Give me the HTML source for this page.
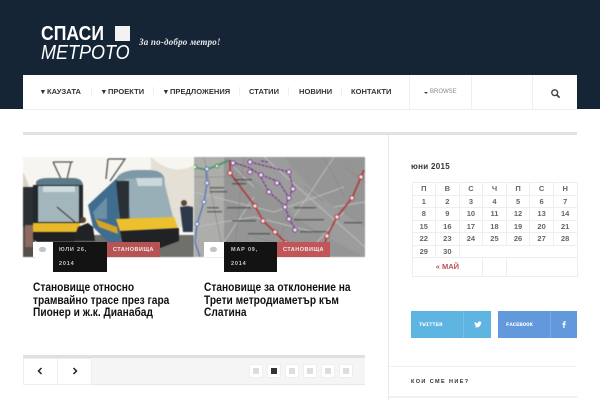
<!DOCTYPE html>
<html><head><meta charset="utf-8">
<style>
*{box-sizing:border-box;margin:0;padding:0}
html,body{width:600px;height:400px;overflow:hidden;background:#fff;font-family:"Liberation Sans","Noto Sans CJK JP",sans-serif;position:relative}
.a{position:absolute}
.t{position:absolute;white-space:nowrap}
.nav{font-size:7.5px;font-weight:bold;color:#333;letter-spacing:.05px;top:87px;line-height:10px}
.sep{position:absolute;top:87px;width:1px;height:8px;background:#eee}
.title{position:absolute;font-size:11.5px;font-weight:bold;color:#111;line-height:12.6px;white-space:nowrap;transform:scaleX(.885);transform-origin:left top}
.meta{position:absolute;font-size:5.5px;font-weight:bold;color:#c9c9c9;letter-spacing:.8px;white-space:nowrap}
.red{position:absolute;background:#b85355;color:#eee;font-size:5.5px;font-weight:bold;letter-spacing:.5px;text-align:center;line-height:16px;height:15px;top:242px}
.dot{position:absolute;top:364px;width:14px;height:14px;background:#fff;border:1px solid #eee}
.dot i{position:absolute;left:3px;top:3px;width:6px;height:6px;background:#ddd;display:block}
table{position:absolute;left:411.5px;top:182px;width:166px;height:94px;border-collapse:collapse;table-layout:fixed;font-size:7.5px;font-weight:bold;color:#666;text-align:center}
td{border:1px solid #eee;padding:0;line-height:10px}
svg.img{filter:blur(.5px)}
</style></head>
<body>
<div class="a" style="left:0;top:0;width:600px;height:109px;background:#152536"></div>
<div class="t" style="left:41px;top:23px;font-size:20px;font-weight:bold;color:#fff;line-height:22px;transform:scaleX(.88);transform-origin:left">СПАСИ</div>
<div class="a" style="left:115px;top:26px;width:15px;height:15px;background:#f2f2f2"></div>
<div class="t" style="left:41px;top:42px;font-size:20px;font-style:italic;color:#fff;line-height:22px;transform:scaleX(.9);transform-origin:left">МЕТРОТО</div>
<div class="t" style="left:139px;top:36px;font-family:'Liberation Serif',serif;font-size:9px;font-style:italic;font-weight:bold;color:#e8e8e8;letter-spacing:.2px;line-height:12px">За по-добро метро!</div>

<div class="a" style="left:23px;top:75px;width:554px;height:35px;background:#fff;border-bottom:1px solid #eee"></div>
<div class="t nav" style="left:41px">▾ КАУЗАТА</div><div class="sep" style="left:91px"></div>
<div class="t nav" style="left:102px">▾ ПРОЕКТИ</div><div class="sep" style="left:153px"></div>
<div class="t nav" style="left:164px">▾ ПРЕДЛОЖЕНИЯ</div><div class="sep" style="left:239px"></div>
<div class="t nav" style="left:249px">СТАТИИ</div><div class="sep" style="left:288px"></div>
<div class="t nav" style="left:299px">НОВИНИ</div><div class="sep" style="left:341px"></div>
<div class="t nav" style="left:351px">КОНТАКТИ</div>
<div class="a" style="left:409px;top:75px;width:1px;height:34px;background:#eee"></div>
<div class="a" style="left:471px;top:75px;width:1px;height:34px;background:#eee"></div>
<div class="a" style="left:532px;top:75px;width:1px;height:34px;background:#eee"></div>
<div class="a" style="left:424px;top:92px;width:0;height:0;border:2px solid transparent;border-top:2.5px solid #444"></div>
<div class="t" style="left:430px;top:88px;font-size:6px;color:#888;line-height:9px">BROWSE</div>
<svg class="a" style="left:550px;top:88px" width="11" height="11" viewBox="0 0 11 11"><circle cx="4.7" cy="4.7" r="2.9" fill="none" stroke="#444" stroke-width="1.4"/><path d="M7 7L9.6 9.6" stroke="#444" stroke-width="1.7"/></svg>

<div class="a" style="left:23px;top:132px;width:554px;height:3px;background:#e2e2e2"></div>
<div class="a" style="left:388px;top:135px;width:1px;height:265px;background:#e8e8e8"></div>

<svg class="a img" style="left:23px;top:157px" width="171" height="100" viewBox="0 0 171 100">
<rect width="171" height="100" fill="#f7f5f0"/>
<path d="M128 0Q150 20 171 8V70H128Z" fill="#e5e0d5"/>
<path d="M0 15Q8 30 14 60H0Z" fill="#d8d2c4"/>
<path d="M55 78H171V100H40Z" fill="#6f6f6c"/>
<rect y="60" width="12" height="40" fill="#55504b"/>
<path d="M30 5L38 22M48 5L44 22M30 5H50" stroke="#555" stroke-width="1.3" fill="none"/>
<path d="M85 2L83 22M85 2H102L87 24" stroke="#555" stroke-width="1.3" fill="none"/>
<path d="M0 30H12V70H0Z" fill="#2c2f33"/>
<path d="M13 25Q15 21 25 21H50Q59 21 60 28V66H13Z" fill="#5d7a88"/>
<rect x="10" y="28" width="50" height="38" fill="#23282d"/>
<rect x="15" y="29" width="41" height="36" fill="#a3b6bc"/>
<rect x="20" y="29" width="32" height="6" fill="#cfdde0"/>
<path d="M10 66H57V75H10Z" fill="#e9b92a"/>
<path d="M10 75H57V82L50 85H14L10 82Z" fill="#1f2022"/>
<path d="M34 50L52 65" stroke="#333" stroke-width="1"/>
<path d="M55 70L65 66L70 70L72 84H50Z" fill="#202226"/><circle cx="60" cy="63" r="3" fill="#5a4030"/>
<rect x="2" y="68" width="8" height="22" fill="#8e6a60"/>
<path d="M65 48L94 21L98 85L88 88L70 70Z" fill="#3f6d90"/>
<path d="M70 55L84 40V62L72 62Z" fill="#6b8fa5"/>
<path d="M72 62L94 70L95 77L76 70Z" fill="#d9a326"/>
<path d="M94 20Q100 13 115 13H125Q138 13 141 20L146 60L97 65Z" fill="#7d99a5"/>
<path d="M102 22L140 20L150 60L108 63Z" fill="#98afb7"/>
<path d="M93 24H106L106 62L97 64Z" fill="#2b3036"/>
<path d="M113 21H139V29H115Z" fill="#ccd9dc"/>
<path d="M93 62L151 60L155 71L97 74Z" fill="#edc02d"/>
<path d="M97 74L156 71V84L137 91L100 89Z" fill="#212225"/>
<path d="M157 50L165 49L170 50V75H160Z" fill="#2e3a4c"/><circle cx="161" cy="46" r="3" fill="#5a4638"/>
</svg>

<svg class="a img" style="left:194px;top:157px" width="171" height="100" viewBox="0 0 171 100">
<rect width="171" height="100" fill="#959595"/>
<path d="M0 0H30V100H0Z" fill="#adadaa"/>
<path d="M30 0Q70 30 90 50T171 100V70Q120 40 90 0Z" fill="#9c9c9c"/>
<g stroke="#bdbdbd" fill="none" stroke-width="1">
<path d="M70 0L171 90M0 35L80 55L150 30M20 100L60 40M100 60L140 0M110 100L150 55M0 70L60 60L120 75M140 50L171 45M40 10L60 30"/>
</g>
<g stroke="#858585" fill="none" stroke-width=".6"><path d="M10 0L30 100M50 0L40 100M90 70L80 100M130 0L150 40M0 20H40M150 10L171 25M110 30L130 45M60 80L100 90"/></g>
<path d="M0 10L12 13L24 8L36 3" stroke="#3b9a5d" stroke-width="1.5" fill="none"/>
<path d="M12 13L13 26L10 45L3 67L1 85L6 100" stroke="#5a78b8" stroke-width="1.3" fill="none"/>
<path d="M36 3L36 16L61 49L69 64L81 75L92 86M170 13L167 20L158 41L143 60L133 79L131 86" stroke="#b23a3e" stroke-width="1.6" fill="none"/>
<g stroke="#7a3f8c" stroke-width="1.3" fill="none" stroke-dasharray="3 1">
<path d="M38 5L56 11L65 17L85 25L95 41L91 49L95 62L102 73M56 5L95 15L99 31L95 41M67 4L75 5M65 17L75 35L91 49"/>
</g>
<g fill="#f2e9ee" stroke="#b23a3e" stroke-width="1"><circle cx="36" cy="16" r="2.2"/><circle cx="61" cy="49" r="2.2"/><circle cx="69" cy="64" r="2.2"/><circle cx="81" cy="75" r="2.2"/><circle cx="92" cy="86" r="2.2"/><circle cx="167" cy="20" r="2.2"/><circle cx="158" cy="41" r="2.2"/><circle cx="143" cy="60" r="2.2"/><circle cx="133" cy="79" r="2.2"/></g>
<g fill="#f0e6f2" stroke="#7a3f8c" stroke-width="1"><circle cx="56" cy="5" r="2.2"/><circle cx="56" cy="15" r="2.2"/><circle cx="67" cy="18" r="2.2"/><circle cx="95" cy="15" r="2.2"/><circle cx="83" cy="26" r="2.2"/><circle cx="99" cy="32" r="2.2"/><circle cx="75" cy="35" r="2.2"/><circle cx="95" cy="41" r="2.2"/><circle cx="91" cy="50" r="2.2"/><circle cx="95" cy="62" r="2.2"/><circle cx="101" cy="73" r="2.2"/><circle cx="39" cy="6" r="2.2"/></g>
<g fill="#e8f4ea" stroke="#3b9a5d"><circle cx="1" cy="10" r="1.8"/><circle cx="23" cy="9" r="1.8"/></g>
<g fill="#e8ecf6" stroke="#5a78b8"><circle cx="13" cy="12" r="2"/><circle cx="13" cy="26" r="2"/><circle cx="10" cy="45" r="2"/><circle cx="3" cy="67" r="2"/></g>
<g fill="#333" opacity=".55"><rect x="16" y="30" width="14" height="1.5"/><rect x="16" y="34" width="17" height="1.5"/><rect x="13" y="50" width="12" height="1.5"/><rect x="13" y="54" width="15" height="1.5"/><rect x="40" y="22" width="18" height="1.5"/><rect x="38" y="26" width="14" height="1.5"/><rect x="33" y="50" width="24" height="1.5"/><rect x="38" y="63" width="24" height="1.5"/><rect x="54" y="76" width="22" height="1.5"/><rect x="100" y="50" width="22" height="1.5"/><rect x="100" y="62" width="30" height="1.5"/><rect x="106" y="74" width="27" height="1.5"/><rect x="150" y="65" width="18" height="1.5"/></g>
</svg>

<div class="a" style="left:33px;top:242px;width:20px;height:15px;background:#fff"></div>
<div class="a" style="left:39px;top:247px;width:7px;height:5px;background:#c4c4c4;border-radius:3px"></div>
<div class="a" style="left:53px;top:242px;width:54px;height:30px;background:#131313"></div>
<div class="meta" style="left:59px;top:246px;line-height:9px">ЮЛИ 26,</div>
<div class="meta" style="left:59px;top:260px;line-height:9px">2014</div>
<div class="red" style="left:107px;width:53px">СТАНОВИЩА</div>

<div class="a" style="left:204px;top:242px;width:20px;height:15px;background:#fff"></div>
<div class="a" style="left:210px;top:247px;width:7px;height:5px;background:#c4c4c4;border-radius:3px"></div>
<div class="a" style="left:224px;top:242px;width:53px;height:30px;background:#131313"></div>
<div class="meta" style="left:231px;top:246px;line-height:9px">МАР 09,</div>
<div class="meta" style="left:231px;top:260px;line-height:9px">2014</div>
<div class="red" style="left:277px;width:53px;background:#c25557">СТАНОВИЩА</div>

<div class="title" style="left:33px;top:282px">Становище относно<br>трамвайно трасе през гара<br>Пионер и ж.к. Дианабад</div>
<div class="title" style="left:204px;top:282px">Становище за отклонение на<br>Трети метродиаметър към<br>Слатина</div>

<div class="a" style="left:23px;top:355px;width:342px;height:30px;background:#f5f5f5;border-top:3px solid #e0e0e0;border-bottom:1px solid #e8e8e8"></div>
<div class="a" style="left:23px;top:358px;width:35px;height:27px;background:#fff;border:1px solid #eee"></div>
<div class="a" style="left:58px;top:358px;width:34px;height:27px;background:#fff;border:1px solid #eee;border-left:0"></div>
<svg class="a" style="left:37px;top:367px" width="6" height="8" viewBox="0 0 6 8"><path d="M4.5 1L1.5 4L4.5 7" fill="none" stroke="#222" stroke-width="1.5"/></svg>
<svg class="a" style="left:72px;top:367px" width="6" height="8" viewBox="0 0 6 8"><path d="M1.5 1L4.5 4L1.5 7" fill="none" stroke="#222" stroke-width="1.5"/></svg>
<div class="dot" style="left:249px"><i></i></div>
<div class="dot" style="left:267px"><i style="background:#333"></i></div>
<div class="dot" style="left:285px"><i></i></div>
<div class="dot" style="left:303px"><i></i></div>
<div class="dot" style="left:321px"><i></i></div>
<div class="dot" style="left:339px"><i></i></div>

<div class="t" style="left:411px;top:161px;font-size:8px;font-weight:bold;color:#333;letter-spacing:.3px;line-height:11px">юни 2015</div>
<table>
<tr style="height:13px"><td>П</td><td>В</td><td>С</td><td>Ч</td><td>П</td><td>С</td><td>Н</td></tr>
<tr style="height:12px"><td>1</td><td>2</td><td>3</td><td>4</td><td>5</td><td>6</td><td>7</td></tr>
<tr style="height:13px"><td>8</td><td>9</td><td>10</td><td>11</td><td>12</td><td>13</td><td>14</td></tr>
<tr style="height:12px"><td>15</td><td>16</td><td>17</td><td>18</td><td>19</td><td>20</td><td>21</td></tr>
<tr style="height:13px"><td>22</td><td>23</td><td>24</td><td>25</td><td>26</td><td>27</td><td>28</td></tr>
<tr style="height:12px"><td>29</td><td>30</td><td colspan="5"></td></tr>
<tr style="height:19px"><td colspan="3" style="color:#b85355">« МАЙ</td><td></td><td colspan="3"></td></tr>
</table>

<div class="a" style="left:411px;top:311px;width:80px;height:27px;background:#5fb5e2"></div>
<div class="a" style="left:463px;top:311px;width:1px;height:27px;background:#77c0e6"></div>
<div class="t" style="left:419px;top:320px;font-family:'Liberation Mono',monospace;font-size:5.6px;font-weight:bold;color:#fff;line-height:9px">TWITTER</div>
<svg class="a" style="left:473.5px;top:320.5px" width="8" height="7" viewBox="0 0 24 20"><path d="M23 3c-.8.4-1.7.6-2.6.7 1-.6 1.7-1.4 2-2.5-.9.5-1.9.9-2.9 1.1C18.7 1.4 17.5.8 16.2.8c-2.5 0-4.5 2-4.5 4.5 0 .4 0 .7.1 1C8 6.1 4.7 4.3 2.5 1.6c-.4.7-.6 1.4-.6 2.3 0 1.6.8 2.9 2 3.7-.7 0-1.4-.2-2-.6v.1c0 2.2 1.6 4 3.6 4.4-.7.2-1.4.2-2 .1.6 1.8 2.2 3.1 4.2 3.1-1.5 1.2-3.5 1.900-5.600 1.900H1c2 1.300 4.400 2 7 2 8.300 0 12.900-6.900 12.900-12.900v-.6c.9-.6 1.600-1.400 2.100-2.100z" fill="#fff"/></svg>

<div class="a" style="left:498px;top:311px;width:79px;height:27px;background:#6299dc"></div>
<div class="a" style="left:550px;top:311px;width:1px;height:27px;background:#7aaae2"></div>
<div class="t" style="left:506px;top:320px;font-family:'Liberation Mono',monospace;font-size:5.6px;font-weight:bold;color:#fff;line-height:9px">FACEBOOK</div>
<svg class="a" style="left:561.5px;top:320.5px" width="4.5" height="7" viewBox="0 0 7 11"><path d="M2 11V6H.5V4H2V2.800C2 1 3 .2 4.500.2H6V2H5C4.300 2 4 2.300 4 3V4H6L5.700 6H4V11Z" fill="#fff"/></svg>

<div class="a" style="left:389px;top:366px;width:188px;height:1px;background:#f0f0f0"></div>
<div class="t" style="left:411px;top:378px;font-size:5.5px;font-weight:bold;color:#333;letter-spacing:1.4px;line-height:8px">КОИ СМЕ НИЕ?</div>
<div class="a" style="left:389px;top:396px;width:188px;height:2px;background:#f0f0f0"></div>
</body></html>
